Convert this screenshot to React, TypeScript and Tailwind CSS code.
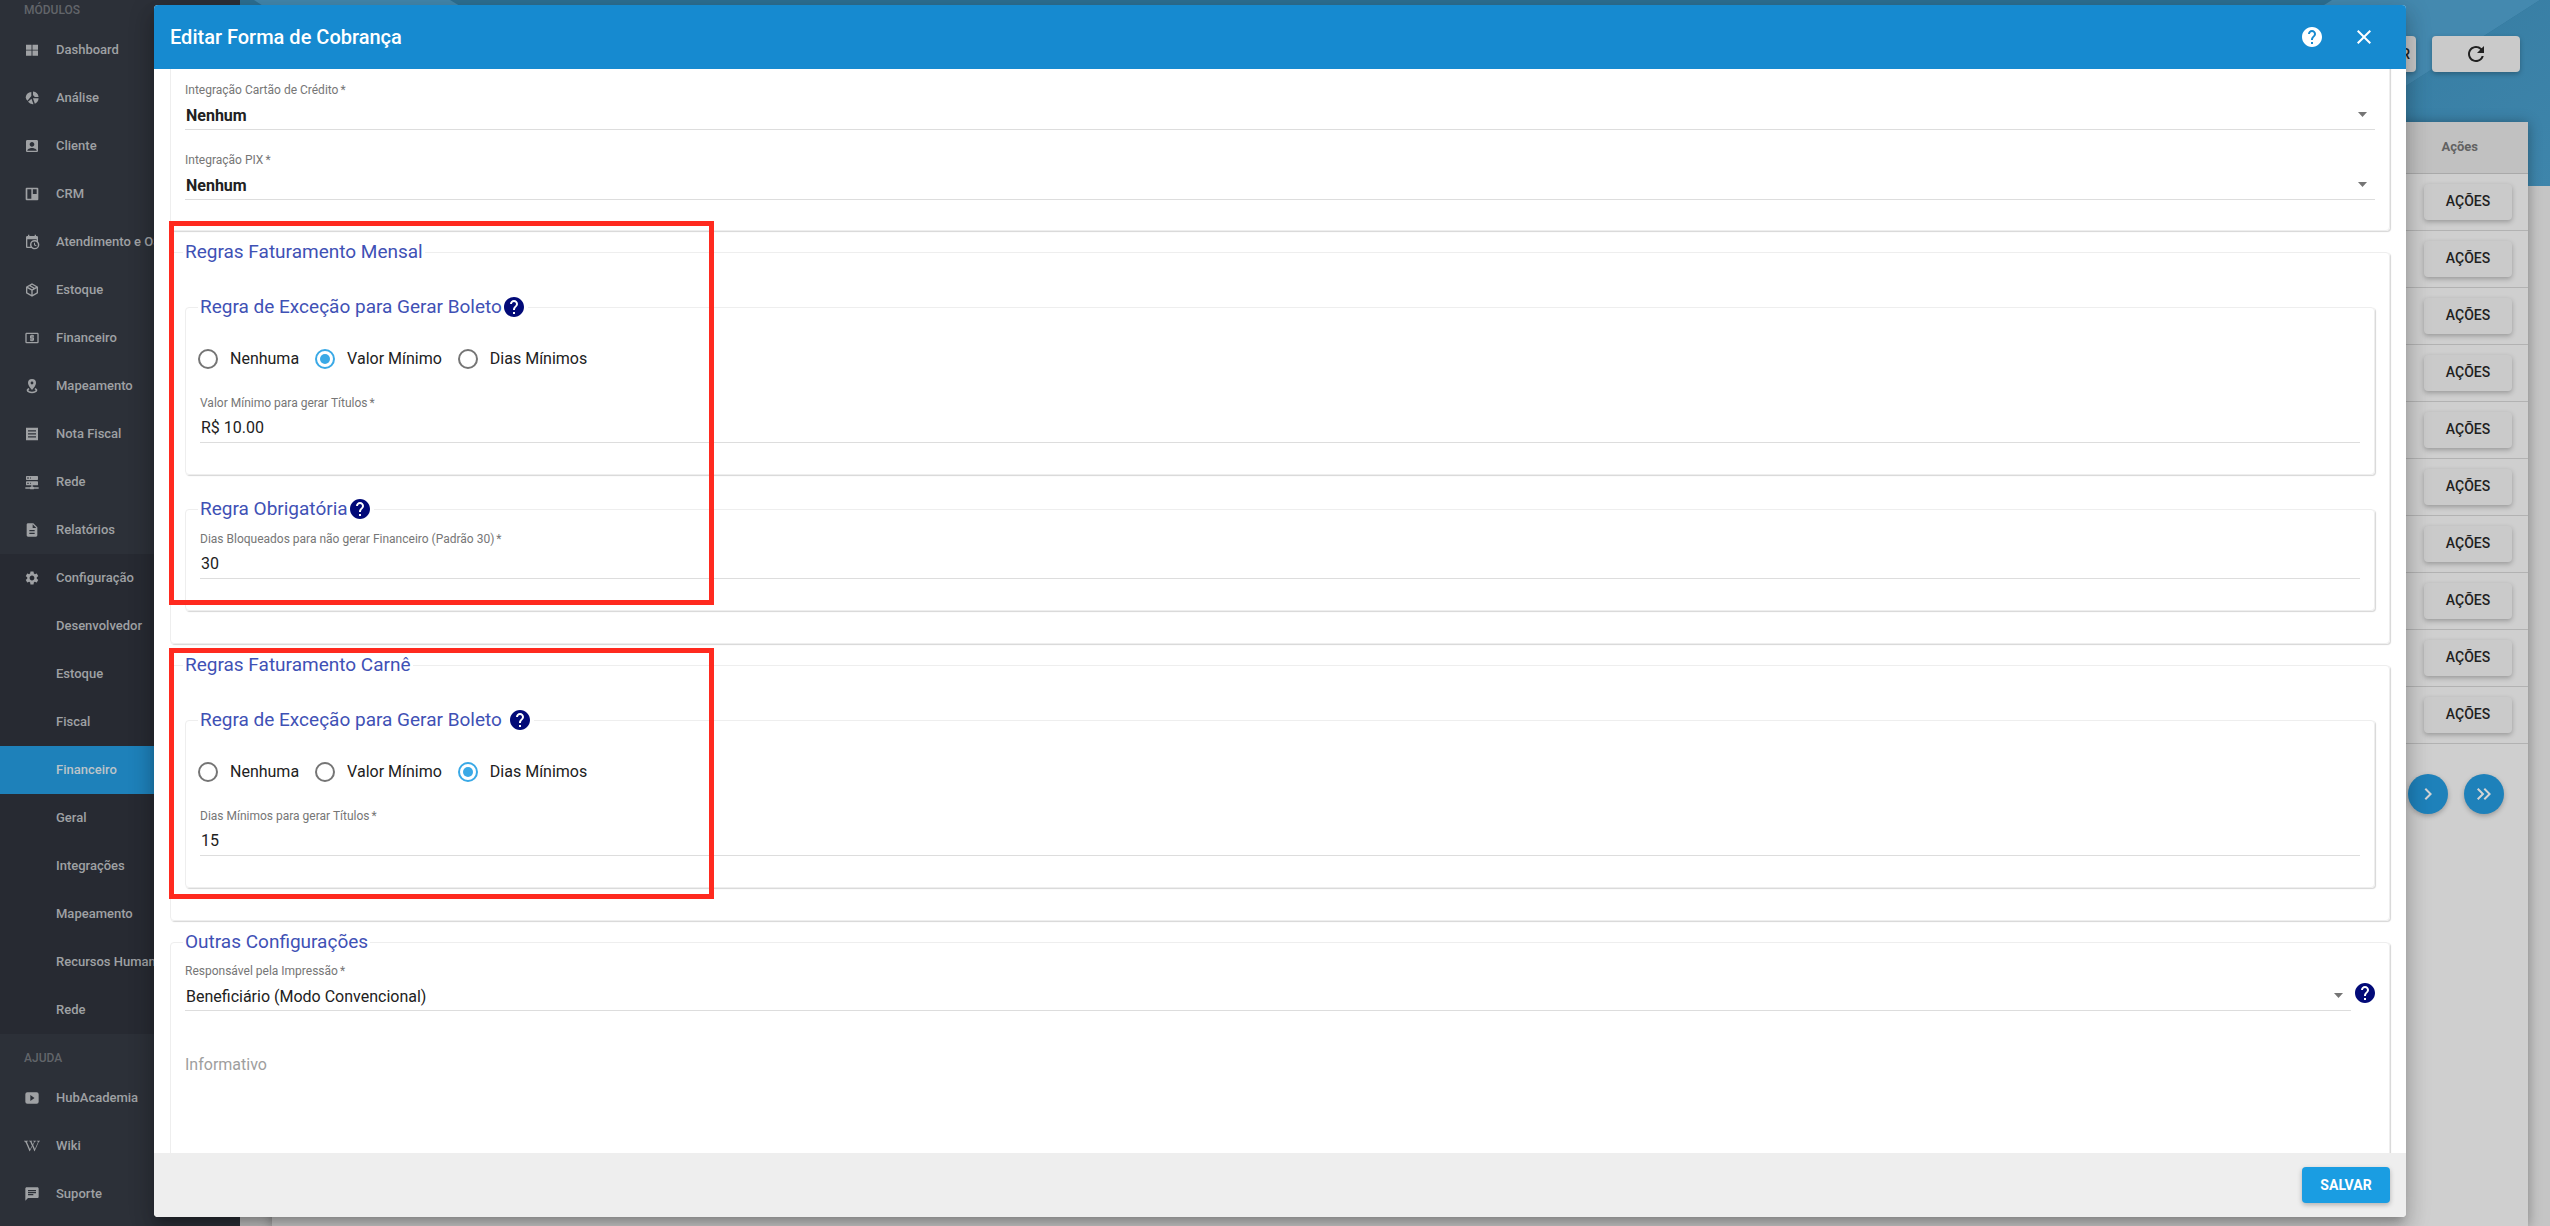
import type { ComponentType, ReactNode, SVGProps } from 'react';
import { useState } from 'react';
import {
  MdAccountBox,
  MdChat,
  MdChevronRight,
  MdClose,
  MdDescription,
  MdHelp,
  MdKeyboardDoubleArrowRight,
  MdRefresh,
  MdSettings,
} from 'react-icons/md';
import { FaWikipediaW } from 'react-icons/fa';

type Icon = ComponentType<{ className?: string }>;

function glyph(d: string, extra?: SVGProps<SVGPathElement>): Icon {
  return function Glyph({ className }) {
    return (
      <svg viewBox="0 0 24 24" fill="currentColor" className={className} aria-hidden="true">
        <path d={d} {...extra} />
      </svg>
    );
  };
}

const GridIcon = glyph('M3 4H11.3V11.5H3V4M12.7 4H21V11.5H12.7V4M3 12.9H11.3V20.5H3V12.9M12.7 12.9H21V20.5H12.7V12.9Z');
const PieIcon = glyph(
  'M13.5 2.1A9.5 9.5 0 0 1 21.9 10.5H16A4 4 0 0 0 13.5 8V2.1M11 3.1V9L5.2 16.2A9.3 9.3 0 0 1 2.5 10.8A9.5 9.5 0 0 1 11 3.1M11.2 13L14.2 21.4A9.5 9.5 0 0 1 6 17.8L11.2 13M13.4 12.5H21.9A9.5 9.5 0 0 1 16.3 20.8L13.4 12.5Z',
);
const BoardIcon = glyph(
  'M4 2.5H20A1.5 1.5 0 0 1 21.5 4V20A1.5 1.5 0 0 1 20 21.5H4A1.5 1.5 0 0 1 2.5 20V4A1.5 1.5 0 0 1 4 2.5M5 5V19H11V5H5M13.3 5V12H19V5H13.3Z',
  { fillRule: 'evenodd' },
);
const CalendarClockIcon = glyph(
  'M15,13H16.5V15.82L18.94,17.23L18.19,18.53L15,16.69V13M19,8H5V19H9.67C9.24,18.09 9,17.07 9,16A7,7 0 0,1 16,9C17.07,9 18.09,9.24 19,9.67V8M5,21C3.89,21 3,20.1 3,19V5C3,3.89 3.89,3 5,3H6V1H8V3H16V1H18V3H19A2,2 0 0,1 21,5V11.1C22.24,12.36 23,14.09 23,16A7,7 0 0,1 16,23C14.09,23 12.36,22.24 11.1,21H5M16,11.15A4.85,4.85 0 0,0 11.15,16C11.15,18.68 13.32,20.85 16,20.85A4.85,4.85 0 0,0 20.85,16C20.85,13.32 18.68,11.15 16,11.15Z',
);
const PackageIcon = glyph(
  'M21,16.5C21,16.88 20.79,17.21 20.47,17.38L12.57,21.82C12.41,21.94 12.21,22 12,22C11.79,22 11.59,21.94 11.43,21.82L3.53,17.38C3.21,17.21 3,16.88 3,16.5V7.5C3,7.12 3.21,6.79 3.53,6.62L11.43,2.18C11.59,2.06 11.79,2 12,2C12.21,2 12.41,2.06 12.57,2.18L20.47,6.62C20.79,6.79 21,7.12 21,7.5V16.5M12,4.15L10.11,5.22L16,8.61L17.96,7.5L12,4.15M6.04,7.5L12,10.85L13.96,9.75L8.08,6.35L6.04,7.5M5,15.91L11,19.29V12.58L5,9.21V15.91M19,15.91V9.21L13,12.58V19.29L19,15.91Z',
);
const CashIcon = glyph(
  'M11,17H13V16H14A1,1 0 0,0 15,15V12A1,1 0 0,0 14,11H11V10H15V8H13V7H11V8H10A1,1 0 0,0 9,9V12A1,1 0 0,0 10,13H13V14H9V16H11V17M20,4H4C2.89,4 2,4.89 2,6V18A2,2 0 0,0 4,20H20A2,2 0 0,0 22,18V6C22,4.89 21.1,4 20,4M20,18H4V6H20V18Z',
);
const MapPinIcon = glyph(
  'M12 1.5A6 6 0 0 1 18 7.5C18 11.8 12 18 12 18S6 11.8 6 7.5A6 6 0 0 1 12 1.5M12 5.4A2.1 2.1 0 1 0 12 9.6A2.1 2.1 0 1 0 12 5.4M7 15L8.2 16.8C7.2 17.2 6.6 17.8 6.6 18.4C6.6 19.7 9 20.6 12 20.6S17.4 19.7 17.4 18.4C17.4 17.8 16.8 17.2 15.8 16.8L17 15C18.8 15.8 20 17 20 18.4C20 21 16.4 22.8 12 22.8S4 21 4 18.4C4 17 5.2 15.8 7 15Z',
  { fillRule: 'evenodd' },
);
const InvoiceIcon = glyph('M3 2.5H21V21.5H3V2.5M6 6.5V8.3H18V6.5H6M6 11V12.8H18V11H6M6 15.5V17.3H18V15.5H6Z', {
  fillRule: 'evenodd',
});
const ServerIcon = glyph(
  'M13,19H14A1,1 0 0,1 15,20H22V22H15A1,1 0 0,1 14,23H10A1,1 0 0,1 9,22H2V20H9A1,1 0 0,1 10,19H11V17H4A1,1 0 0,1 3,16V12A1,1 0 0,1 4,11H20A1,1 0 0,1 21,12V16A1,1 0 0,1 20,17H13V19M4,3H20A1,1 0 0,1 21,4V8A1,1 0 0,1 20,9H4A1,1 0 0,1 3,8V4A1,1 0 0,1 4,3M9,7H10V5H9V7M9,15H10V13H9V15M5,5V7H7V5H5M5,13V15H7V13H5Z',
);
const VideoIcon = glyph(
  'M5 3.5H19A3 3 0 0 1 22 6.5V17.5A3 3 0 0 1 19 20.5H5A3 3 0 0 1 2 17.5V6.5A3 3 0 0 1 5 3.5M9.5 7.5V16.5L15.8 12L9.5 7.5Z',
  { fillRule: 'evenodd' },
);

interface MenuEntry {
  label: string;
  icon?: Icon;
  active?: boolean;
}

const modules: MenuEntry[] = [
  { label: 'Dashboard', icon: GridIcon },
  { label: 'Análise', icon: PieIcon },
  { label: 'Cliente', icon: MdAccountBox },
  { label: 'CRM', icon: BoardIcon },
  { label: 'Atendimento e OS', icon: CalendarClockIcon },
  { label: 'Estoque', icon: PackageIcon },
  { label: 'Financeiro', icon: CashIcon },
  { label: 'Mapeamento', icon: MapPinIcon },
  { label: 'Nota Fiscal', icon: InvoiceIcon },
  { label: 'Rede', icon: ServerIcon },
  { label: 'Relatórios', icon: MdDescription },
];

const settings: MenuEntry[] = [
  { label: 'Configuração', icon: MdSettings },
  { label: 'Desenvolvedor' },
  { label: 'Estoque' },
  { label: 'Fiscal' },
  { label: 'Financeiro', active: true },
  { label: 'Geral' },
  { label: 'Integrações' },
  { label: 'Mapeamento' },
  { label: 'Recursos Humanos' },
  { label: 'Rede' },
];

const help: MenuEntry[] = [
  { label: 'HubAcademia', icon: VideoIcon },
  { label: 'Wiki', icon: FaWikipediaW },
  { label: 'Suporte', icon: MdChat },
];

function MenuList({ entries }: { entries: MenuEntry[] }) {
  return (
    <ul>
      {entries.map(({ label, icon: EntryIcon, active }) => (
        <li key={label}>
          <a
            href="#"
            className={`flex h-12 items-center gap-4 px-6 text-[13px] font-medium whitespace-nowrap ${
              active ? 'bg-[#1e81ba] text-[#bcc4c9]' : 'text-[#9fa1a4]'
            }`}
          >
            <span className="w-4 shrink-0">{EntryIcon && <EntryIcon className="size-4" />}</span>
            {label}
          </a>
        </li>
      ))}
    </ul>
  );
}

function MenuHeading({ children }: { children: ReactNode }) {
  return <h2 className="flex h-10 items-center px-6 pt-2 text-[12px] font-medium text-[#62656a]">{children}</h2>;
}

function Sidebar() {
  return (
    <nav className="w-60 shrink-0 overflow-hidden bg-[#2c3038]">
      <div className="-mt-[14px]">
        <MenuHeading>MÓDULOS</MenuHeading>
        <MenuList entries={modules} />
        <div className="bg-[#272a32]">
          <MenuList entries={settings} />
        </div>
        <MenuHeading>AJUDA</MenuHeading>
        <MenuList entries={help} />
      </div>
    </nav>
  );
}

const raised = 'rounded bg-[#cacaca] text-[14px] font-medium text-[#212121] shadow-[0_2px_5px_rgba(0,0,0,0.26)]';

function BillingPage() {
  return (
    <main className="relative flex min-w-0 grow flex-col bg-[#c5c5c5]">
      <svg
        viewBox="0 0 2310 186"
        preserveAspectRatio="xMaxYMin slice"
        className="absolute inset-x-0 top-0 h-[186px] w-full"
        aria-hidden="true"
      >
        <defs>
          <linearGradient id="band" x1="0" y1="0" x2="1" y2="1">
            <stop offset="0" stopColor="#347aa0" />
            <stop offset="1" stopColor="#3e85ab" />
          </linearGradient>
        </defs>
        <rect width="2310" height="186" fill="#2d7094" />
        <polygon points="14,0 210,0 260,30 60,30" fill="#4388ae" />
        <polygon points="2092,0 2300,0 2010,186 1800,186" fill="#4489af" />
        <polygon points="2300,0 2310,0 2310,186 2010,186" fill="url(#band)" />
      </svg>
      <div className="relative flex justify-end gap-4 pt-9 pr-[30px]">
        <button type="button" className={`h-9 px-[6px] ${raised}`}>
          ADICIONAR
        </button>
        <button type="button" aria-label="Atualizar" className={`flex h-9 w-[88px] items-center justify-center ${raised}`}>
          <MdRefresh className="size-6" />
        </button>
      </div>
      <section className="relative mt-[50px] mr-[22px] ml-8 flex grow flex-col bg-[#cfcfcf] shadow-[0_1px_12px_rgba(0,0,0,0.35)]">
        <table className="w-full border-collapse">
          <thead>
            <tr className="h-[51px] border-b border-[#a9a9a9] bg-[#c1c1c1]">
              <th className="pr-[50px] pb-0.5 text-right text-[13px] font-bold text-[#626262]">Ações</th>
            </tr>
          </thead>
          <tbody>
            {Array.from({ length: 10 }, (_, row) => (
              <tr key={row} className="h-[57px] border-b border-[#b2b2b2]">
                <td className="pr-4 text-right">
                  <button type="button" className={`h-9 w-[88px] align-middle ${raised}`}>
                    AÇÕES
                  </button>
                </td>
              </tr>
            ))}
          </tbody>
        </table>
        <div className="flex justify-end gap-4 pt-[30px] pr-6 text-[#d4d4d4]">
          <button
            type="button"
            aria-label="Próxima página"
            className="flex size-10 items-center justify-center rounded-full bg-[#1e81ba] shadow-[0_2px_5px_rgba(0,0,0,0.26)]"
          >
            <MdChevronRight className="size-6" />
          </button>
          <button
            type="button"
            aria-label="Última página"
            className="flex size-10 items-center justify-center rounded-full bg-[#1e81ba] shadow-[0_2px_5px_rgba(0,0,0,0.26)]"
          >
            <MdKeyboardDoubleArrowRight className="size-6" />
          </button>
        </div>
      </section>
    </main>
  );
}

function HelpButton({ label, className = '' }: { label: string; className?: string }) {
  return (
    <button type="button" aria-label={label} className={`text-[#020a78] ${className}`}>
      <MdHelp className="size-6" />
    </button>
  );
}

interface GroupProps {
  title?: string;
  help?: 'tight' | 'spaced';
  className?: string;
  children: ReactNode;
}

function Group({ title, help: helpStyle, className = '', children }: GroupProps) {
  return (
    <fieldset className={`rounded border border-[#eeeeee] px-3 shadow-[1px_1px_1px_#d6d6d6] ${className}`}>
      {title && (
        <legend className="px-0.5 text-[19px] leading-6 text-[#3f51b5]">
          <span className={`flex items-center ${helpStyle === 'spaced' ? 'gap-1.5' : ''}`}>
            {title}
            {helpStyle && <HelpButton label={`Ajuda: ${title}`} />}
          </span>
        </legend>
      )}
      {children}
    </fieldset>
  );
}

function FieldLabel({ id, children }: { id: string; children: ReactNode }) {
  return (
    <label htmlFor={id} className="block text-[12px] leading-4 text-[#767676]">
      {children}
      <span className="ml-0.5">*</span>
    </label>
  );
}

function TextField({ id, label, value, className = '' }: { id: string; label: string; value: string; className?: string }) {
  return (
    <div className={`mx-0.5 ${className}`}>
      <FieldLabel id={id}>{label}</FieldLabel>
      <input
        id={id}
        defaultValue={value}
        className="block h-8 w-full border-b border-[#dddddd] bg-transparent px-px pt-0.5 text-[16px] text-[#212121] outline-none"
      />
    </div>
  );
}

function SelectField({ id, label, value, bold, className = '' }: { id: string; label: string; value: string; bold?: boolean; className?: string }) {
  return (
    <div className={className}>
      <FieldLabel id={id}>{label}</FieldLabel>
      <div className="relative">
        <select
          id={id}
          className={`block h-8 w-full appearance-none border-b border-[#dddddd] bg-transparent px-px pt-1 text-[16px] text-[#212121] outline-none ${
            bold ? 'font-bold' : ''
          }`}
        >
          <option>{value}</option>
        </select>
        <svg viewBox="0 0 9 5" className="pointer-events-none absolute top-[14px] right-2 h-[5px] w-[9px] fill-[#757575]" aria-hidden="true">
          <path d="M0 0H9L4.5 5Z" />
        </svg>
      </div>
    </div>
  );
}

const exceptionOptions = ['Nenhuma', 'Valor Mínimo', 'Dias Mínimos'];

function ExceptionRadios({ name, initial }: { name: string; initial: string }) {
  const [chosen, setChosen] = useState(initial);
  return (
    <div className="flex gap-4 pt-7">
      {exceptionOptions.map((option) => (
        <label key={option} className="flex items-center gap-3 text-[16px] leading-6 text-[#212121]">
          <input
            type="radio"
            name={name}
            checked={chosen === option}
            onChange={() => setChosen(option)}
            className="size-5 appearance-none rounded-full border-2 border-[#757575] bg-clip-content p-[3px] checked:border-[#3aa9e6] checked:bg-[#3aa9e6]"
          />
          {option}
        </label>
      ))}
    </div>
  );
}

function Highlight({ className }: { className: string }) {
  return (
    <div
      className={`pointer-events-none absolute left-[15px] w-[545px] border-[5px] border-[#ff2a1f] ${className}`}
      aria-hidden="true"
    />
  );
}

function EditDialog() {
  return (
    <div
      role="dialog"
      aria-labelledby="dialog-title"
      className="flex min-w-0 grow flex-col overflow-hidden rounded bg-white shadow-[0_7px_8px_-4px_rgba(0,0,0,0.2),0_13px_19px_2px_rgba(0,0,0,0.14),0_5px_24px_4px_rgba(0,0,0,0.12)]"
    >
      <header className="flex h-16 shrink-0 items-center bg-[#168ad0] px-4 text-white">
        <h1 id="dialog-title" className="grow text-[20px] font-medium">
          Editar Forma de Cobrança
        </h1>
        <button type="button" aria-label="Ajuda" className="mr-7">
          <MdHelp className="size-6" />
        </button>
        <button type="button" aria-label="Fechar" className="mr-[14px]">
          <MdClose className="size-6" />
        </button>
      </header>

      <form className="relative min-h-0 grow overflow-hidden px-4">
        <Group className="-mt-2 pt-5 pb-[30px]">
          <SelectField id="cartao" label="Integração Cartão de Crédito" value="Nenhum" bold className="mx-0.5" />
          <SelectField id="pix" label="Integração PIX" value="Nenhum" bold className="mx-0.5 mt-[22px]" />
        </Group>

        <Group title="Regras Faturamento Mensal" className="mt-[9px] pt-[31px] pb-8">
          <Group title="Regra de Exceção para Gerar Boleto" help="tight" className="mx-0.5 pb-[31px]">
            <ExceptionRadios name="mensal" initial="Valor Mínimo" />
            <TextField id="valor-minimo" label="Valor Mínimo para gerar Títulos" value="R$ 10.00" className="mt-6" />
          </Group>
          <Group title="Regra Obrigatória" help="tight" className="mx-0.5 mt-[22px] pt-[10px] pb-[31px]">
            <TextField id="dias-bloqueados" label="Dias Bloqueados para não gerar Financeiro (Padrão 30)" value="30" />
          </Group>
        </Group>

        <Group title="Regras Faturamento Carnê" className="mt-[9px] pt-[31px] pb-8">
          <Group title="Regra de Exceção para Gerar Boleto" help="spaced" className="mx-0.5 pb-[31px]">
            <ExceptionRadios name="carne" initial="Dias Mínimos" />
            <TextField id="dias-minimos" label="Dias Mínimos para gerar Títulos" value="15" className="mt-6" />
          </Group>
        </Group>

        <Group title="Outras Configurações" className="mt-[9px] pt-[9px] pb-8">
          <div className="mx-0.5 flex items-center gap-0.5">
            <SelectField id="responsavel" label="Responsável pela Impressão" value="Beneficiário (Modo Convencional)" className="grow" />
            <HelpButton label="Ajuda: Responsável pela Impressão" className="mt-3 -mr-0.5" />
          </div>
          <textarea
            aria-label="Informativo"
            placeholder="Informativo"
            className="mx-0.5 mt-[42px] block h-40 w-full resize-none bg-transparent text-[16px] leading-6 outline-none placeholder:text-[#9e9e9e]"
          />
        </Group>

        <Highlight className="top-[152px] h-[384px]" />
        <Highlight className="top-[579px] h-[251px]" />
      </form>

      <footer className="flex h-16 shrink-0 items-center justify-end bg-[#eeeeee] px-4">
        <button
          type="button"
          className="h-9 w-[88px] rounded bg-[#1a9de2] text-[14px] font-bold text-white shadow-[0_2px_5px_rgba(0,0,0,0.26)]"
        >
          SALVAR
        </button>
      </footer>
    </div>
  );
}

export default function App() {
  return (
    <div className="relative flex h-screen overflow-hidden font-[Roboto,sans-serif]">
      <Sidebar />
      <BillingPage />
      <div className="absolute inset-0 flex pt-[5px] pr-36 pb-[9px] pl-[154px]">
        <EditDialog />
      </div>
    </div>
  );
}
